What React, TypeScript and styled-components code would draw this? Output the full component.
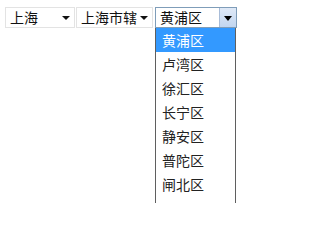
import React from "react";
import styled, { createGlobalStyle } from "styled-components";

const GlobalStyle = createGlobalStyle`
  html, body {
    margin: 0;
    background: #ffffff;
    font-family: "Noto Sans CJK SC", "Noto Sans", sans-serif;
  }
`;

const Row = styled.div`
  display: flex;
  flex-direction: row;
  align-items: flex-start;
  padding: 7px 0 0 5px;
  gap: 1px;
`;

const Field = styled.div`
  display: flex;
  flex-direction: column;
  margin-left: 1px;
`;

const Select = styled.div<{ $width: number; $open?: boolean }>`
  box-sizing: border-box;
  width: ${(p) => p.$width}px;
  height: 21px;
  display: flex;
  flex-direction: row;
  align-items: center;
  border: 1px solid ${(p) => (p.$open ? "#7f9db9" : "#e3e3e3")};
  background: #ffffff;
  font-size: 14px;
  color: #111;
  cursor: default;
`;

const Label = styled.span`
  flex: 1;
  padding-left: 4px;
  line-height: 19px;
  white-space: nowrap;
  overflow: hidden;
`;

const Arrow = styled.span`
  flex: none;
  width: 0;
  height: 0;
  margin: 0 4px 0 2px;
  border-left: 4px solid transparent;
  border-right: 4px solid transparent;
  border-top: 4px solid #111;
`;

const ArrowButton = styled.span`
  box-sizing: border-box;
  flex: none;
  width: 17px;
  height: 19px;
  display: flex;
  align-items: center;
  justify-content: center;
  background: linear-gradient(#dfe9f7, #c2d6f0);
  border-left: 1px solid #a8bcd8;
`;

const ButtonArrow = styled.span`
  width: 0;
  height: 0;
  margin-top: 2px;
  border-left: 4px solid transparent;
  border-right: 4px solid transparent;
  border-top: 5px solid #000;
`;

const List = styled.ul`
  box-sizing: border-box;
  width: 81px;
  height: 175px;
  margin: 0;
  padding: 0;
  list-style: none;
  background: #ffffff;
  border: 1px solid #5f5f5f;
  border-top: none;
  border-bottom: none;
  overflow: hidden;
`;

const Item = styled.li<{ $active?: boolean }>`
  height: 24px;
  line-height: 24px;
  padding-left: 6px;
  font-size: 14px;
  background: ${(p) => (p.$active ? "#3399ff" : "transparent")};
  color: ${(p) => (p.$active ? "#ffffff" : "#222")};
`;

const districts = ["黄浦区", "卢湾区", "徐汇区", "长宁区", "静安区", "普陀区", "闸北区"];

export default function App() {
  return (
    <>
      <GlobalStyle />
      <Row>
        <Select $width={70}>
          <Label>上海</Label>
          <Arrow />
        </Select>
        <Select $width={77}>
          <Label>上海市辖</Label>
          <Arrow />
        </Select>
        <Field>
          <Select $width={82} $open>
            <Label>黄浦区</Label>
            <ArrowButton>
              <ButtonArrow />
            </ArrowButton>
          </Select>
          <List>
            {districts.map((d, i) => (
              <Item key={d} $active={i === 0}>
                {d}
              </Item>
            ))}
          </List>
        </Field>
      </Row>
    </>
  );
}
